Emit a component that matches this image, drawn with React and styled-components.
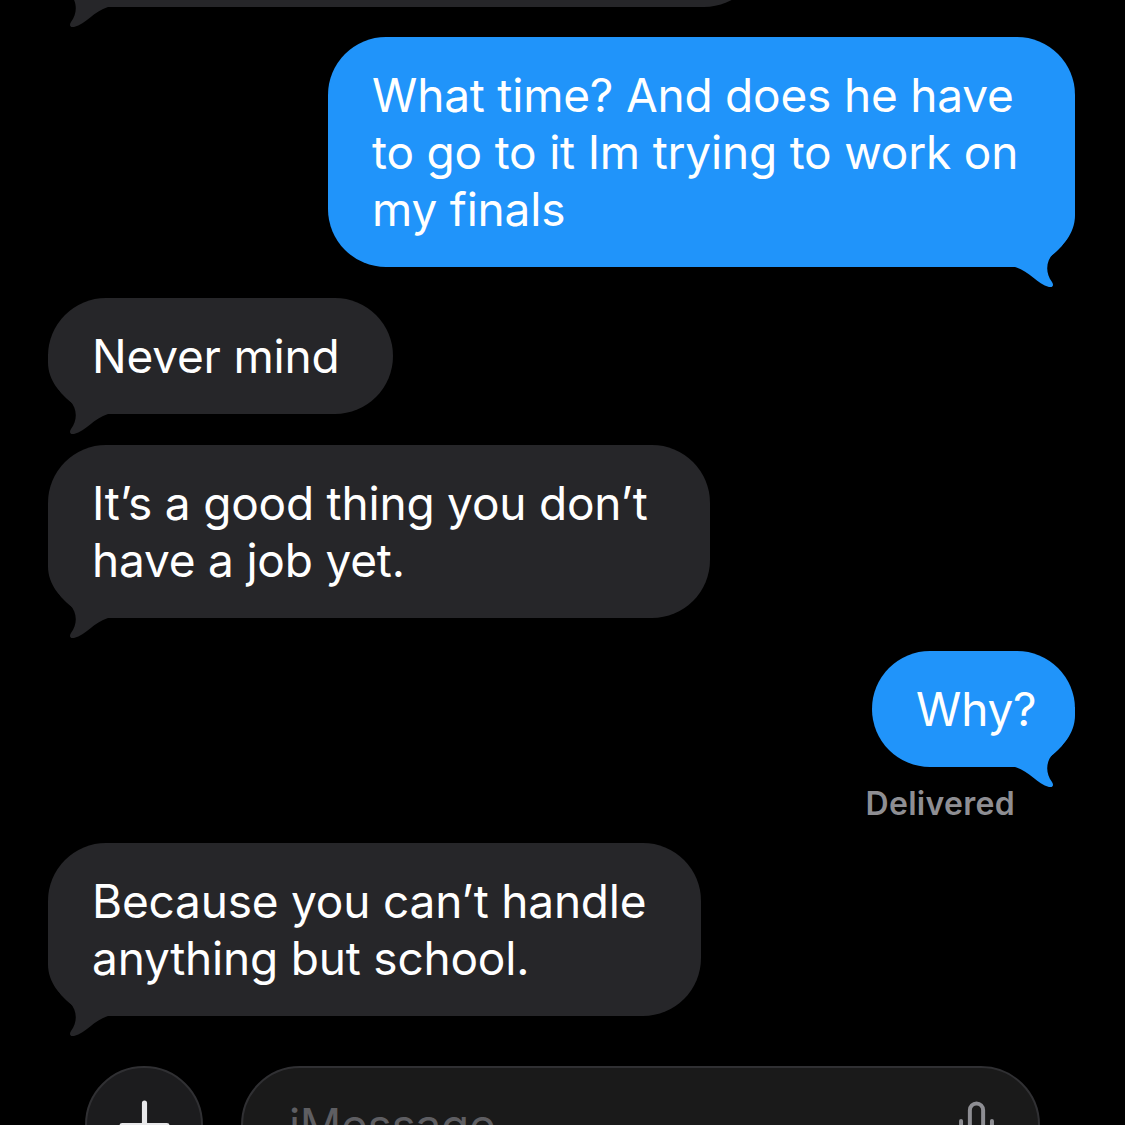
import React from 'react';
import styled, { createGlobalStyle } from 'styled-components';
import { Plus, Mic } from 'lucide-react';

const BLUE = '#2094fa';
const GRAY = '#262629';

const GlobalStyle = createGlobalStyle`
  html, body {
    margin: 0;
    padding: 0;
    background: #000;
    overflow: hidden;
  }
  body {
    font-family: Inter, "Noto Sans", "Liberation Sans", sans-serif;
    -webkit-font-smoothing: antialiased;
  }
`;

const Screen = styled.div`
  width: 1125px;
  height: 1125px;
  overflow: hidden;
  background: #000;
  display: flex;
  flex-direction: column;
`;

const Thread = styled.div`
  display: flex;
  flex-direction: column;
  padding: 0 50px 0 48px;
  margin-top: -109px;
`;

const Row = styled.div`
  display: flex;
  justify-content: ${p => (p.$mine ? 'flex-end' : 'flex-start')};
  margin-top: ${p => p.$gap || 0}px;
`;

const Bubble = styled.div`
  position: relative;
  box-sizing: border-box;
  width: ${p => (p.$width ? `${p.$width}px` : 'auto')};
  padding: 30px 0 29px 44px;
  border-radius: 58px;
  background: ${p => (p.$mine ? BLUE : GRAY)};
  color: #fff;
  font-size: 46px;
  line-height: 57px;
  letter-spacing: -0.2px;
  white-space: nowrap;
`;

const BubbleText = styled.span`
  position: relative;
  z-index: 1;
`;

const TailSvg = styled.svg`
  position: absolute;
  z-index: 0;
  bottom: -20px;
  width: 60px;
  height: 80px;
  ${p => (p.$mine ? 'right: 0;' : 'left: 0; transform: scaleX(-1);')}
`;

const Tail = ({ mine }) => (
  <TailSvg $mine={mine} viewBox="0 0 60 80">
    <path
      d="M0 0 H60 V8 C60 28 46 40 38 47 C31 54 30 66 37 75 C39 78 38 81 34 80 C22 77 14 64 0 60 Z"
      fill={mine ? BLUE : GRAY}
    />
  </TailSvg>
);

const Message = ({ mine, gap, width, children }) => (
  <Row $mine={mine} $gap={gap}>
    <Bubble $mine={mine} $width={width}>
      <Tail mine={mine} />
      <BubbleText>{children}</BubbleText>
    </Bubble>
  </Row>
);

const Status = styled.div`
  align-self: flex-end;
  margin: 18px 60px 0 0;
  color: #8e8e93;
  font-size: 32px;
  line-height: 38px;
  font-weight: 600;
  letter-spacing: 0.3px;
`;

const InputBar = styled.div`
  display: flex;
  align-items: flex-start;
  gap: 38px;
  margin-top: 50px;
  padding: 0 85px;
`;

const RoundButton = styled.div`
  flex: none;
  width: 118px;
  height: 118px;
  box-sizing: border-box;
  border-radius: 50%;
  background: #1c1c1e;
  border: 2px solid #303033;
  display: flex;
  align-items: center;
  justify-content: center;
  color: #e8e8ea;
`;

const Field = styled.div`
  flex: 1;
  height: 118px;
  box-sizing: border-box;
  border-radius: 59px;
  background: #1a1a1a;
  border: 2px solid #303033;
  display: flex;
  align-items: center;
  padding: 0 35px 0 46px;
`;

const Placeholder = styled.span`
  flex: 1;
  color: #5e5e62;
  font-size: 46px;
  letter-spacing: -0.3px;
`;

export default function App() {
  return (
    <Screen>
      <GlobalStyle />
      <Thread>
        <Message width={714}>&nbsp;</Message>
        <Message mine gap={30} width={747}>
          What time? And does he have<br />
          to go to it Im trying to work on<br />
          my finals
        </Message>
        <Message gap={31} width={345}>Never mind</Message>
        <Message gap={31} width={662}>
          It’s a good thing you don’t<br />
          have a job yet.
        </Message>
        <Message mine gap={33} width={203}>Why?</Message>
        <Status>Delivered</Status>
        <Message gap={20} width={653}>
          Because you can’t handle<br />
          anything but school.
        </Message>
      </Thread>
      <InputBar>
        <RoundButton>
          <Plus size={77} strokeWidth={1.6} />
        </RoundButton>
        <Field>
          <Placeholder>iMessage</Placeholder>
          <Mic size={53} strokeWidth={1.8} color="#8e8e93" />
        </Field>
      </InputBar>
    </Screen>
  );
}
